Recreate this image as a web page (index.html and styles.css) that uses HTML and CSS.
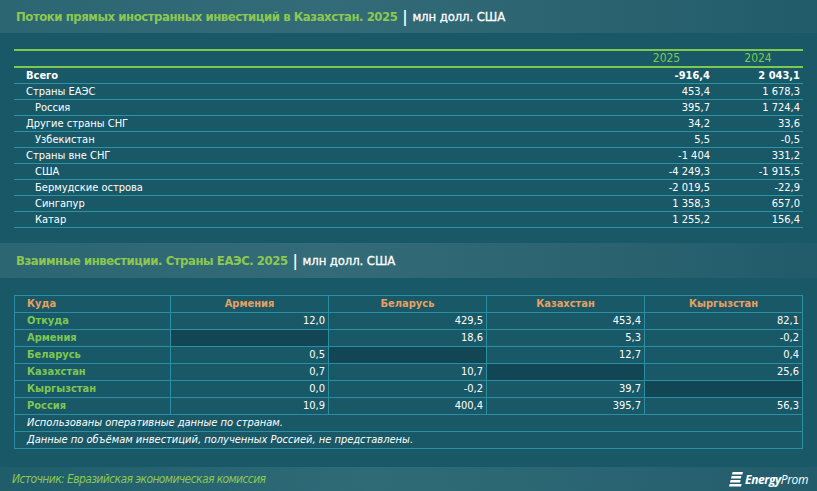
FILE: index.html
```html
<!DOCTYPE html>
<html lang="ru">
<head>
<meta charset="utf-8">
<title>Инвестиции</title>
<link rel="stylesheet" href="styles.css">
</head>
<body>
<div class="page">
  <div class="bar bar-top">
    <span class="title-green">Потоки прямых иностранных инвестиций в Казахстан. 2025</span>
    <span class="title-sep">|</span>
    <span class="title-unit">млн долл. США</span>
  </div>
  <div class="section section-one">
    <table class="flows">
      <colgroup><col class="c-label"><col class="c-num"><col class="c-num2"></colgroup>
      <thead>
        <tr><th></th><th>2025</th><th>2024</th></tr>
      </thead>
      <tbody>
        <tr class="bold"><td>Всего</td><td>-916,4</td><td>2 043,1</td></tr>
        <tr><td>Страны ЕАЭС</td><td>453,4</td><td>1 678,3</td></tr>
        <tr><td class="ind">Россия</td><td>395,7</td><td>1 724,4</td></tr>
        <tr><td>Другие страны СНГ</td><td>34,2</td><td>33,6</td></tr>
        <tr><td class="ind">Узбекистан</td><td>5,5</td><td>-0,5</td></tr>
        <tr><td>Страны вне СНГ</td><td>-1 404</td><td>331,2</td></tr>
        <tr><td class="ind">США</td><td>-4 249,3</td><td>-1 915,5</td></tr>
        <tr><td class="ind">Бермудские острова</td><td>-2 019,5</td><td>-22,9</td></tr>
        <tr><td class="ind">Сингапур</td><td>1 358,3</td><td>657,0</td></tr>
        <tr><td class="ind">Катар</td><td>1 255,2</td><td>156,4</td></tr>
      </tbody>
    </table>
  </div>
  <div class="bar bar-mid">
    <span class="title-green">Взаимные инвестиции. Страны ЕАЭС. 2025</span>
    <span class="title-sep">|</span>
    <span class="title-unit">млн долл. США</span>
  </div>
  <div class="section section-two">
    <table class="matrix">
      <colgroup><col class="m-first"><col class="m-col"><col class="m-col"><col class="m-col"><col class="m-last"></colgroup>
      <thead>
        <tr><th class="left">Куда</th><th>Армения</th><th>Беларусь</th><th>Казахстан</th><th>Кыргызстан</th></tr>
      </thead>
      <tbody>
        <tr><td class="lab">Откуда</td><td>12,0</td><td>429,5</td><td>453,4</td><td>82,1</td></tr>
        <tr><td class="lab">Армения</td><td class="dark"></td><td>18,6</td><td>5,3</td><td>-0,2</td></tr>
        <tr><td class="lab">Беларусь</td><td>0,5</td><td class="dark"></td><td>12,7</td><td>0,4</td></tr>
        <tr><td class="lab">Казахстан</td><td>0,7</td><td>10,7</td><td class="dark"></td><td>25,6</td></tr>
        <tr><td class="lab">Кыргызстан</td><td>0,0</td><td>-0,2</td><td>39,7</td><td class="dark"></td></tr>
        <tr><td class="lab">Россия</td><td>10,9</td><td>400,4</td><td>395,7</td><td>56,3</td></tr>
        <tr><td class="note" colspan="5">Использованы оперативные данные по странам.</td></tr>
        <tr><td class="note" colspan="5">Данные по объёмам инвестиций, полученных Россией, не представлены.</td></tr>
      </tbody>
    </table>
  </div>
  <div class="footer">
    <span class="source">Источник: Евразийская экономическая комиссия</span>
    <span class="logo">
      <svg class="logo-icon" width="14" height="15" viewBox="0 0 14 15">
        <polygon points="3.6,0 14,0 13.4,2.6 3,2.6" fill="#ffffff"/>
        <polygon points="2.6,4 12.4,4 11.8,6.6 2,6.6" fill="#ffffff"/>
        <polygon points="1.6,8 11.6,8 11,10.6 1,10.6" fill="#ffffff"/>
        <polygon points="0.6,12 12.6,12 12,14.6 0,14.6" fill="#ffffff"/>
      </svg>
      <span class="logo-text"><b>Energy</b>Prom</span>
    </span>
  </div>
</div>
</body>
</html>
```

FILE: styles.css
```css
html, body {
  margin: 0;
  padding: 0;
}
body {
  width: 817px;
  height: 491px;
  overflow: hidden;
  background: #185867;
  font-family: "DejaVu Sans Condensed", "DejaVu Sans", sans-serif;
  font-stretch: semi-condensed;
  color: #ffffff;
}
.page {
  display: flex;
  flex-direction: column;
  height: 491px;
}
.bar {
  display: flex;
  align-items: center;
  gap: 5px;
  padding-left: 16px;
  background: linear-gradient(90deg, #2d6673 0%, #336c78 40%, #2a6270 75%, #215b69 100%);
  font-size: 13px;
  font-weight: bold;
}
.bar-top {
  height: 33px;
}
.bar-mid {
  height: 35px;
}
.title-green {
  color: #8cc850;
  letter-spacing: -0.45px;
}
.title-sep {
  color: #ffffff;
  font-size: 15px;
  font-weight: bold;
}
.title-unit {
  color: #ffffff;
  font-weight: normal;
  letter-spacing: -0.1px;
  -webkit-text-stroke: 0.3px #ffffff;
}
.section-one {
  padding: 16px 14px 15px 14px;
}
.section-two {
  padding: 17px 15px 18px 14px;
}
table {
  border-collapse: collapse;
  table-layout: fixed;
}
.flows {
  width: 789px;
  font-size: 11px;
}
.flows .c-label { width: 606px; }
.flows .c-num { width: 93px; }
.flows .c-num2 { width: 90px; }
.flows thead th {
  border-top: 2px solid #7ec850;
  border-bottom: 2px solid #7ec850;
  height: 15px;
  padding: 0;
  color: #7ec850;
  font-size: 12px;
  font-weight: normal;
  text-align: center;
  line-height: 15px;
}
.flows td {
  height: 15px;
  padding: 0 3px 0 12px;
  border-bottom: 1px solid #2a95a6;
  text-align: right;
  line-height: 15px;
  color: #ffffff;
}
.flows td:first-child {
  text-align: left;
}
.flows td.ind {
  padding-left: 21px;
}
.flows tr.bold td {
  font-weight: bold;
}
.matrix {
  width: 788px;
  font-size: 11px;
}
.matrix .m-first { width: 156px; }
.matrix .m-col { width: 158px; }
.matrix .m-last { width: 158px; }
.matrix th, .matrix td {
  border: 1px solid #2a8fa3;
  height: 16px;
  padding: 0 3px;
  line-height: 16px;
}
.matrix th {
  color: #e8a060;
  font-weight: bold;
  text-align: center;
}
.matrix th.left {
  text-align: left;
  padding-left: 12px;
}
.matrix td {
  text-align: right;
  color: #ffffff;
}
.matrix td.lab {
  text-align: left;
  padding-left: 12px;
  color: #7ec850;
  font-weight: bold;
}
.matrix td.dark {
  background: #134654;
}
.matrix td.note {
  text-align: left;
  padding-left: 12px;
  font-style: italic;
}
.footer {
  flex: 1;
  display: flex;
  align-items: center;
  justify-content: space-between;
  padding: 0 9px 0 12px;
  background: linear-gradient(90deg, #1f5d6b 0%, #2f6b77 45%, #2a6472 75%, #225c6a 100%);
}
.source {
  font-family: "DejaVu Sans Condensed", "DejaVu Sans", sans-serif;
  font-stretch: condensed;
  font-style: italic;
  font-size: 12px;
  letter-spacing: -0.6px;
  color: #8cc850;
}
.logo {
  display: flex;
  align-items: center;
  gap: 2px;
}
.logo-text {
  font-family: "Open Sans", "DejaVu Sans", sans-serif;
  font-stretch: normal;
  font-style: italic;
  font-size: 12px;
  letter-spacing: -0.4px;
  color: #ffffff;
}
.logo-text b {
  font-weight: bold;
}
```
